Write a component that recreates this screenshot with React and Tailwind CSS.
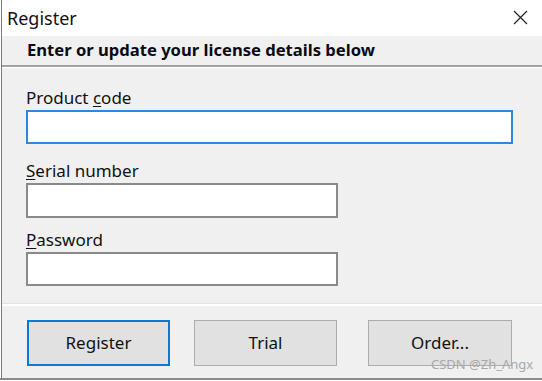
import React from "react";

export default function App() {
  const font = { fontFamily: '"Noto Sans", "Segoe UI", sans-serif' };
  return (
    <div
      className="relative w-[542px] h-[381px] bg-white overflow-hidden text-[#000]"
      style={font}
    >
      <div className="ml-[1px] h-[378px] border-l border-[#7a7a7a] flex flex-col bg-[#f0f0f0]">
        {/* title bar */}
        <div className="h-[36px] bg-white flex items-center justify-between pl-[5px] pr-[14px] shrink-0">
          <span className="text-[18px] leading-none text-[#111]">Register</span>
          <svg width="15" height="15" viewBox="0 0 15 15" className="mt-[-2px]">
            <path d="M1 1L14 14M14 1L1 14" stroke="#222" strokeWidth="1.2" fill="none" />
          </svg>
        </div>
        {/* header band */}
        <div className="h-[29px] flex items-center pl-[25px] shrink-0">
          <span className="text-[16.6px] font-bold leading-none text-[#0a0a14]">
            Enter or update your license details below
          </span>
        </div>
        <div className="h-[2px] bg-[#a0a0a0] shrink-0" />
        <div className="h-[1px] bg-white shrink-0" />
        {/* body */}
        <div className="flex-1 pl-[24px] flex flex-col">
          <label className="mt-[19px] text-[17px] leading-[22px] text-[#111]">
            Product <span className="underline underline-offset-2">c</span>ode
          </label>
          <div className="mt-[1px] w-[487px] h-[34px] bg-white border-2 border-[#2f86dc]" />
          <label className="mt-[16px] text-[17px] leading-[22px] text-[#111]">
            <span className="underline underline-offset-2">S</span>erial number
          </label>
          <div className="mt-[1px] w-[312px] h-[35px] bg-white border-2 border-[#8a8a8a]" />
          <label className="mt-[11px] text-[17px] leading-[22px] text-[#111]">
            <span className="underline underline-offset-2">P</span>assword
          </label>
          <div className="mt-[1px] w-[312px] h-[34px] bg-white border-2 border-[#8a8a8a]" />
        </div>
        <div className="h-[1px] bg-[#e3e3e3] shrink-0" />
        <div className="h-[2px] bg-white shrink-0" />
        {/* footer */}
        <div className="h-[72px] shrink-0 flex items-start pl-[25px] pt-[14px] gap-[24px]">
          <button className="w-[143px] h-[46px] bg-[#e1e1e1] border-2 border-[#0a78d7] text-[17px] text-[#111]">
            Register
          </button>
          <button className="w-[143px] h-[46px] bg-[#e1e1e1] border border-[#adadad] text-[17px] text-[#111]">
            Trial
          </button>
          <button className="w-[144px] h-[46px] bg-[#e1e1e1] border border-[#adadad] text-[17px] text-[#111] ml-[7px]">
            Order...
          </button>
        </div>
      </div>
      <div className="h-[2px] bg-[#8a8a8a]" />
      <span className="absolute left-[431px] top-[358px] text-[13px] leading-none text-[#a8a8a8]">
        CSDN @Zh_Angx
      </span>
    </div>
  );
}
